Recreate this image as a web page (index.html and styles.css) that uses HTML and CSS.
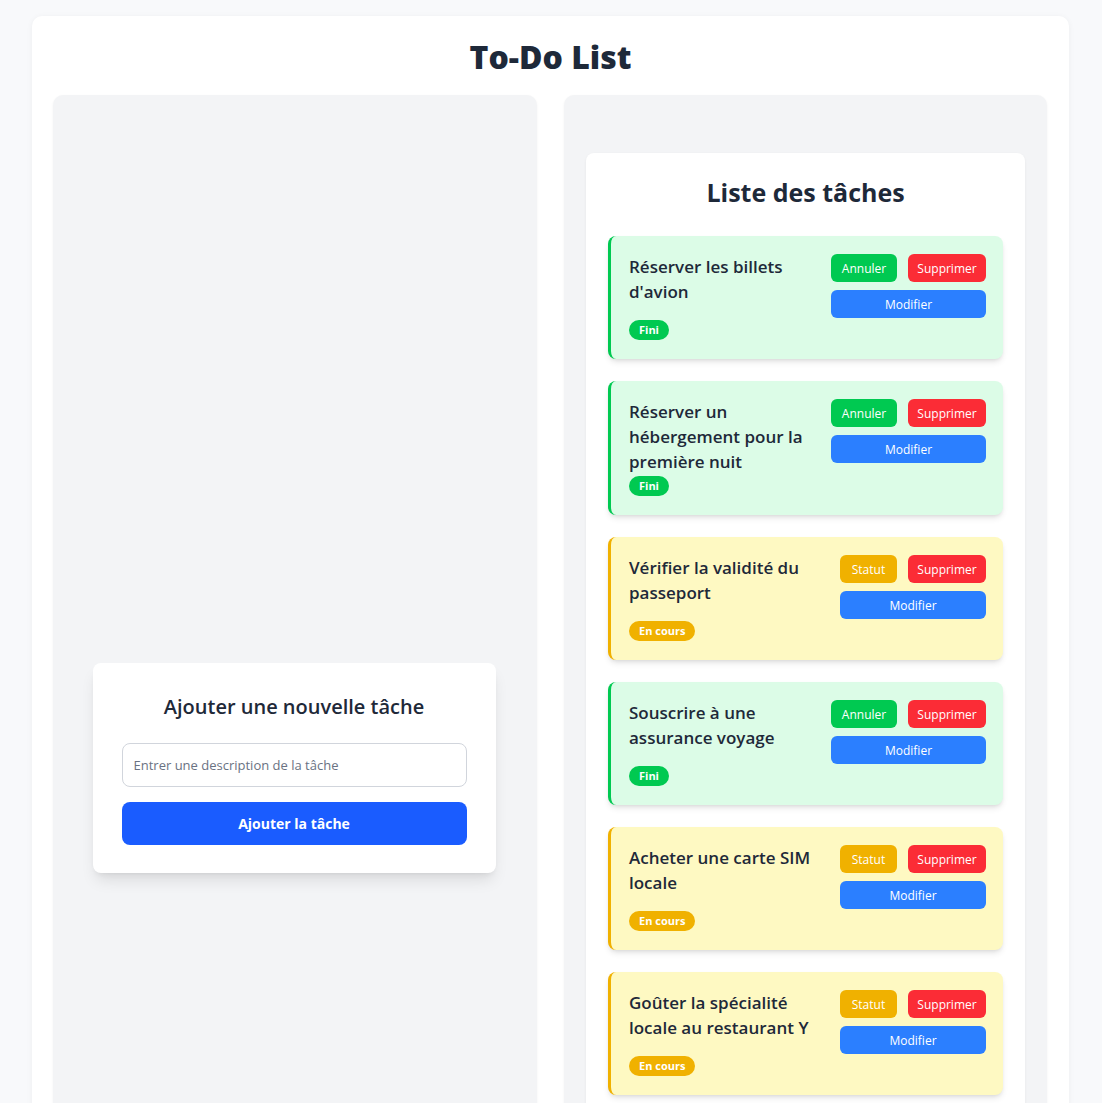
FILE: index.html
```html
<!DOCTYPE html>
<html lang="fr">
<head>
<meta charset="utf-8">
<title>To-Do List</title>
<link rel="stylesheet" href="styles.css">
</head>
<body>
<div class="app">
  <h1 class="app-title">To-Do List</h1>
  <div class="columns">
    <section class="panel panel-left">
      <div class="add-card">
        <h2 class="add-title">Ajouter une nouvelle tâche</h2>
        <input class="add-input" type="text" placeholder="Entrer une description de la tâche">
        <button class="add-btn">Ajouter la tâche</button>
      </div>
    </section>
    <section class="panel panel-right">
      <div class="list-card">
        <h2 class="list-title">Liste des tâches</h2>
        <div class="tasks">
          <div class="task done">
            <div class="task-info"><p class="task-title">Réserver les billets d'avion</p><span class="badge">Fini</span></div>
            <div class="task-actions"><div class="btn-row"><button class="btn btn-green">Annuler</button><button class="btn btn-red">Supprimer</button></div><button class="btn btn-blue">Modifier</button></div>
          </div>
          <div class="task done">
            <div class="task-info"><p class="task-title">Réserver un hébergement pour la première nuit</p><span class="badge">Fini</span></div>
            <div class="task-actions"><div class="btn-row"><button class="btn btn-green">Annuler</button><button class="btn btn-red">Supprimer</button></div><button class="btn btn-blue">Modifier</button></div>
          </div>
          <div class="task pending">
            <div class="task-info"><p class="task-title">Vérifier la validité du passeport</p><span class="badge">En cours</span></div>
            <div class="task-actions"><div class="btn-row"><button class="btn btn-yellow">Statut</button><button class="btn btn-red">Supprimer</button></div><button class="btn btn-blue">Modifier</button></div>
          </div>
          <div class="task done">
            <div class="task-info"><p class="task-title">Souscrire à une assurance voyage</p><span class="badge">Fini</span></div>
            <div class="task-actions"><div class="btn-row"><button class="btn btn-green">Annuler</button><button class="btn btn-red">Supprimer</button></div><button class="btn btn-blue">Modifier</button></div>
          </div>
          <div class="task pending">
            <div class="task-info"><p class="task-title">Acheter une carte SIM locale</p><span class="badge">En cours</span></div>
            <div class="task-actions"><div class="btn-row"><button class="btn btn-yellow">Statut</button><button class="btn btn-red">Supprimer</button></div><button class="btn btn-blue">Modifier</button></div>
          </div>
          <div class="task pending">
            <div class="task-info"><p class="task-title">Goûter la spécialité locale au restaurant Y</p><span class="badge">En cours</span></div>
            <div class="task-actions"><div class="btn-row"><button class="btn btn-yellow">Statut</button><button class="btn btn-red">Supprimer</button></div><button class="btn btn-blue">Modifier</button></div>
          </div>
          <div class="task pending">
            <div class="task-info"><p class="task-title">Visiter le musée national</p><span class="badge">En cours</span></div>
            <div class="task-actions"><div class="btn-row"><button class="btn btn-yellow">Statut</button><button class="btn btn-red">Supprimer</button></div><button class="btn btn-blue">Modifier</button></div>
          </div>
          <div class="task pending">
            <div class="task-info"><p class="task-title">Acheter des souvenirs</p><span class="badge">En cours</span></div>
            <div class="task-actions"><div class="btn-row"><button class="btn btn-yellow">Statut</button><button class="btn btn-red">Supprimer</button></div><button class="btn btn-blue">Modifier</button></div>
          </div>
        </div>
      </div>
    </section>
  </div>
</div>
</body>
</html>
```

FILE: styles.css
```css
* { box-sizing: border-box; }

html, body {
  margin: 0;
  padding: 0;
}

body {
  background: #f8f9fb;
  font-family: "Open Sans", "Noto Sans", "Liberation Sans", sans-serif;
  color: #1e2939;
  padding: 16px 33px 16px 32px;
}

.app {
  background: #ffffff;
  border-radius: 10px;
  box-shadow: 0 1px 6px rgba(0, 0, 0, 0.05);
  padding: 23px 21px 21px 21px;
}

.app-title {
  margin: 0 0 20px 0;
  text-align: center;
  font-size: 32px;
  line-height: 36px;
  font-weight: 800;
  color: #1e2939;
}

.columns {
  display: grid;
  grid-template-columns: 484px 483px;
  column-gap: 27px;
  align-items: stretch;
}

.panel {
  background: #f3f4f6;
  border-radius: 10px;
  box-shadow: 0 1px 3px rgba(0, 0, 0, 0.05);
}

.panel-left {
  display: flex;
  align-items: center;
  justify-content: center;
  padding: 40px 41px 40px 39px;
}

.panel-right {
  padding: 58px 22px 34px 22px;
}

.add-card {
  width: 403px;
  background: #ffffff;
  border-radius: 8px;
  padding: 30px 29px 28px 29px;
  box-shadow: 0 10px 15px -3px rgba(0, 0, 0, 0.1), 0 4px 6px -4px rgba(0, 0, 0, 0.1);
  display: flex;
  flex-direction: column;
}

.add-title {
  margin: 0 0 22px 0;
  text-align: center;
  font-size: 20px;
  line-height: 28px;
  font-weight: 600;
}

.add-input {
  height: 44px;
  border: 1px solid #d1d5dc;
  border-radius: 8px;
  padding: 0 11px;
  font-family: inherit;
  font-size: 13px;
  color: #1e2939;
  outline: none;
  margin-bottom: 15px;
}

.add-input::placeholder {
  color: #6a7282;
}

.add-btn {
  height: 43px;
  border: none;
  border-radius: 8px;
  background: #1a5cff;
  color: #ffffff;
  font-family: inherit;
  font-size: 14px;
  font-weight: 700;
}

.list-card {
  background: #ffffff;
  border-radius: 8px;
  padding: 22px;
  box-shadow: 0 1px 3px rgba(0, 0, 0, 0.06);
}

.list-title {
  margin: 0 0 27px 0;
  text-align: center;
  font-size: 25px;
  line-height: 34px;
  font-weight: 700;
}

.tasks {
  display: flex;
  flex-direction: column;
  gap: 22px;
}

.task {
  display: flex;
  gap: 16px;
  min-height: 123px;
  padding: 18px 17px 19px 18px;
  border-left: 3px solid;
  border-radius: 8px;
  box-shadow: 0 4px 6px -1px rgba(0, 0, 0, 0.1), 0 2px 4px -2px rgba(0, 0, 0, 0.1);
}

.task.done {
  background: #dcfce7;
  border-left-color: #00c951;
}

.task.pending {
  background: #fef9c2;
  border-left-color: #f0b100;
}

.task-info {
  flex: 1;
  display: flex;
  flex-direction: column;
  justify-content: space-between;
  align-items: flex-start;
  gap: 2px;
}

.task-title {
  margin: 0;
  font-size: 17px;
  line-height: 25px;
  font-weight: 600;
}

.badge {
  height: 20px;
  line-height: 20px;
  padding: 0 10px;
  border-radius: 999px;
  color: #ffffff;
  font-size: 11px;
  font-weight: 700;
}

.task.done .badge { background: #00c951; }
.task.pending .badge { background: #f0b100; }

.task-actions {
  align-self: flex-start;
  display: flex;
  flex-direction: column;
  gap: 8px;
}

.btn-row {
  display: flex;
  gap: 11px;
}

.btn {
  height: 28px;
  border: none;
  border-radius: 6px;
  color: #ffffff;
  font-family: inherit;
  font-size: 12px;
  padding: 0;
}

.btn-green { background: #00c951; width: 66px; }
.btn-yellow { background: #f0b100; width: 57px; }
.btn-red { background: #fb2c36; width: 78px; }
.btn-blue { background: #2b7fff; width: 100%; }
```
